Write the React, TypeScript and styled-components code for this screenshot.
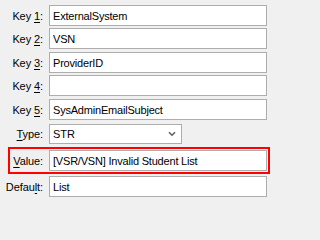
import React from 'react';
import styled, { createGlobalStyle } from 'styled-components';

const GlobalStyle = createGlobalStyle`
  html, body {
    margin: 0;
    padding: 0;
    background: #f0f0f0;
  }
  body {
    font-family: "Liberation Sans", Arial, sans-serif;
    font-size: 11px;
    color: #000;
  }
`;

const Form = styled.div`
  display: flex;
  flex-direction: column;
  width: 271px;
  height: 202px;
  padding-top: 5px;
  box-sizing: border-box;
  overflow: hidden;
`;

const Row = styled.div<{ $space?: number }>`
  display: flex;
  align-items: center;
  margin-top: ${p => p.$space ?? 0}px;
`;

const Label = styled.label<{ $width?: number }>`
  width: ${p => p.$width ?? 43}px;
  margin-right: 6px;
  text-align: right;
  white-space: nowrap;
  letter-spacing: -0.1px;
`;

const Accel = styled.span`
  text-decoration: underline;
  text-underline-offset: 2px;
`;

const TextBox = styled.input`
  width: 218px;
  height: 21px;
  box-sizing: border-box;
  margin: 0;
  padding: 0 3px;
  border: 1px solid #adadad;
  background: #fff;
  font: inherit;
  letter-spacing: -0.2px;
  color: #000;
  outline: none;
`;

const Combo = styled.div`
  display: flex;
  align-items: center;
  justify-content: space-between;
  width: 133px;
  height: 20px;
  box-sizing: border-box;
  padding: 0 5px 0 3px;
  border: 1px solid #adadad;
  background: #fff;
`;

const Highlight = styled.div<{ $space?: number }>`
  width: 262px;
  margin-top: ${p => p.$space ?? 0}px;
  margin-left: 8px;
  padding: 1px 1px 1px 0;
  box-sizing: border-box;
  border: 2px solid #ff0000;
`;

const Chevron = () => (
  <svg width="8" height="6" viewBox="0 0 8 6">
    <path d="M1 1.2 L4 4.2 L7 1.2" fill="none" stroke="#5f5f5f" strokeWidth="1.6" />
  </svg>
);

const keys = [
  { n: '1', value: 'ExternalSystem', space: 0 },
  { n: '2', value: 'VSN', space: 2 },
  { n: '3', value: 'ProviderID', space: 3 },
  { n: '4', value: '', space: 2 },
  { n: '5', value: 'SysAdminEmailSubject', space: 3 },
];

export default function App() {
  return (
    <>
      <GlobalStyle />
      <Form>
        {keys.map(k => (
          <Row key={k.n} $space={k.space}>
            <Label>
              Key <Accel>{k.n}</Accel>:
            </Label>
            <TextBox readOnly value={k.value} />
          </Row>
        ))}
        <Row $space={4}>
          <Label>
            <Accel>T</Accel>ype:
          </Label>
          <Combo>
            <span>STR</span>
            <Chevron />
          </Combo>
        </Row>
        <Highlight $space={3}>
          <Row>
            <Label $width={33}>
              <Accel>V</Accel>alue:
            </Label>
            <TextBox readOnly value="[VSR/VSN] Invalid Student List" />
          </Row>
        </Highlight>
        <Row $space={2}>
          <Label>
            Defau<Accel>l</Accel>t:
          </Label>
          <TextBox readOnly value="List" />
        </Row>
      </Form>
    </>
  );
}
